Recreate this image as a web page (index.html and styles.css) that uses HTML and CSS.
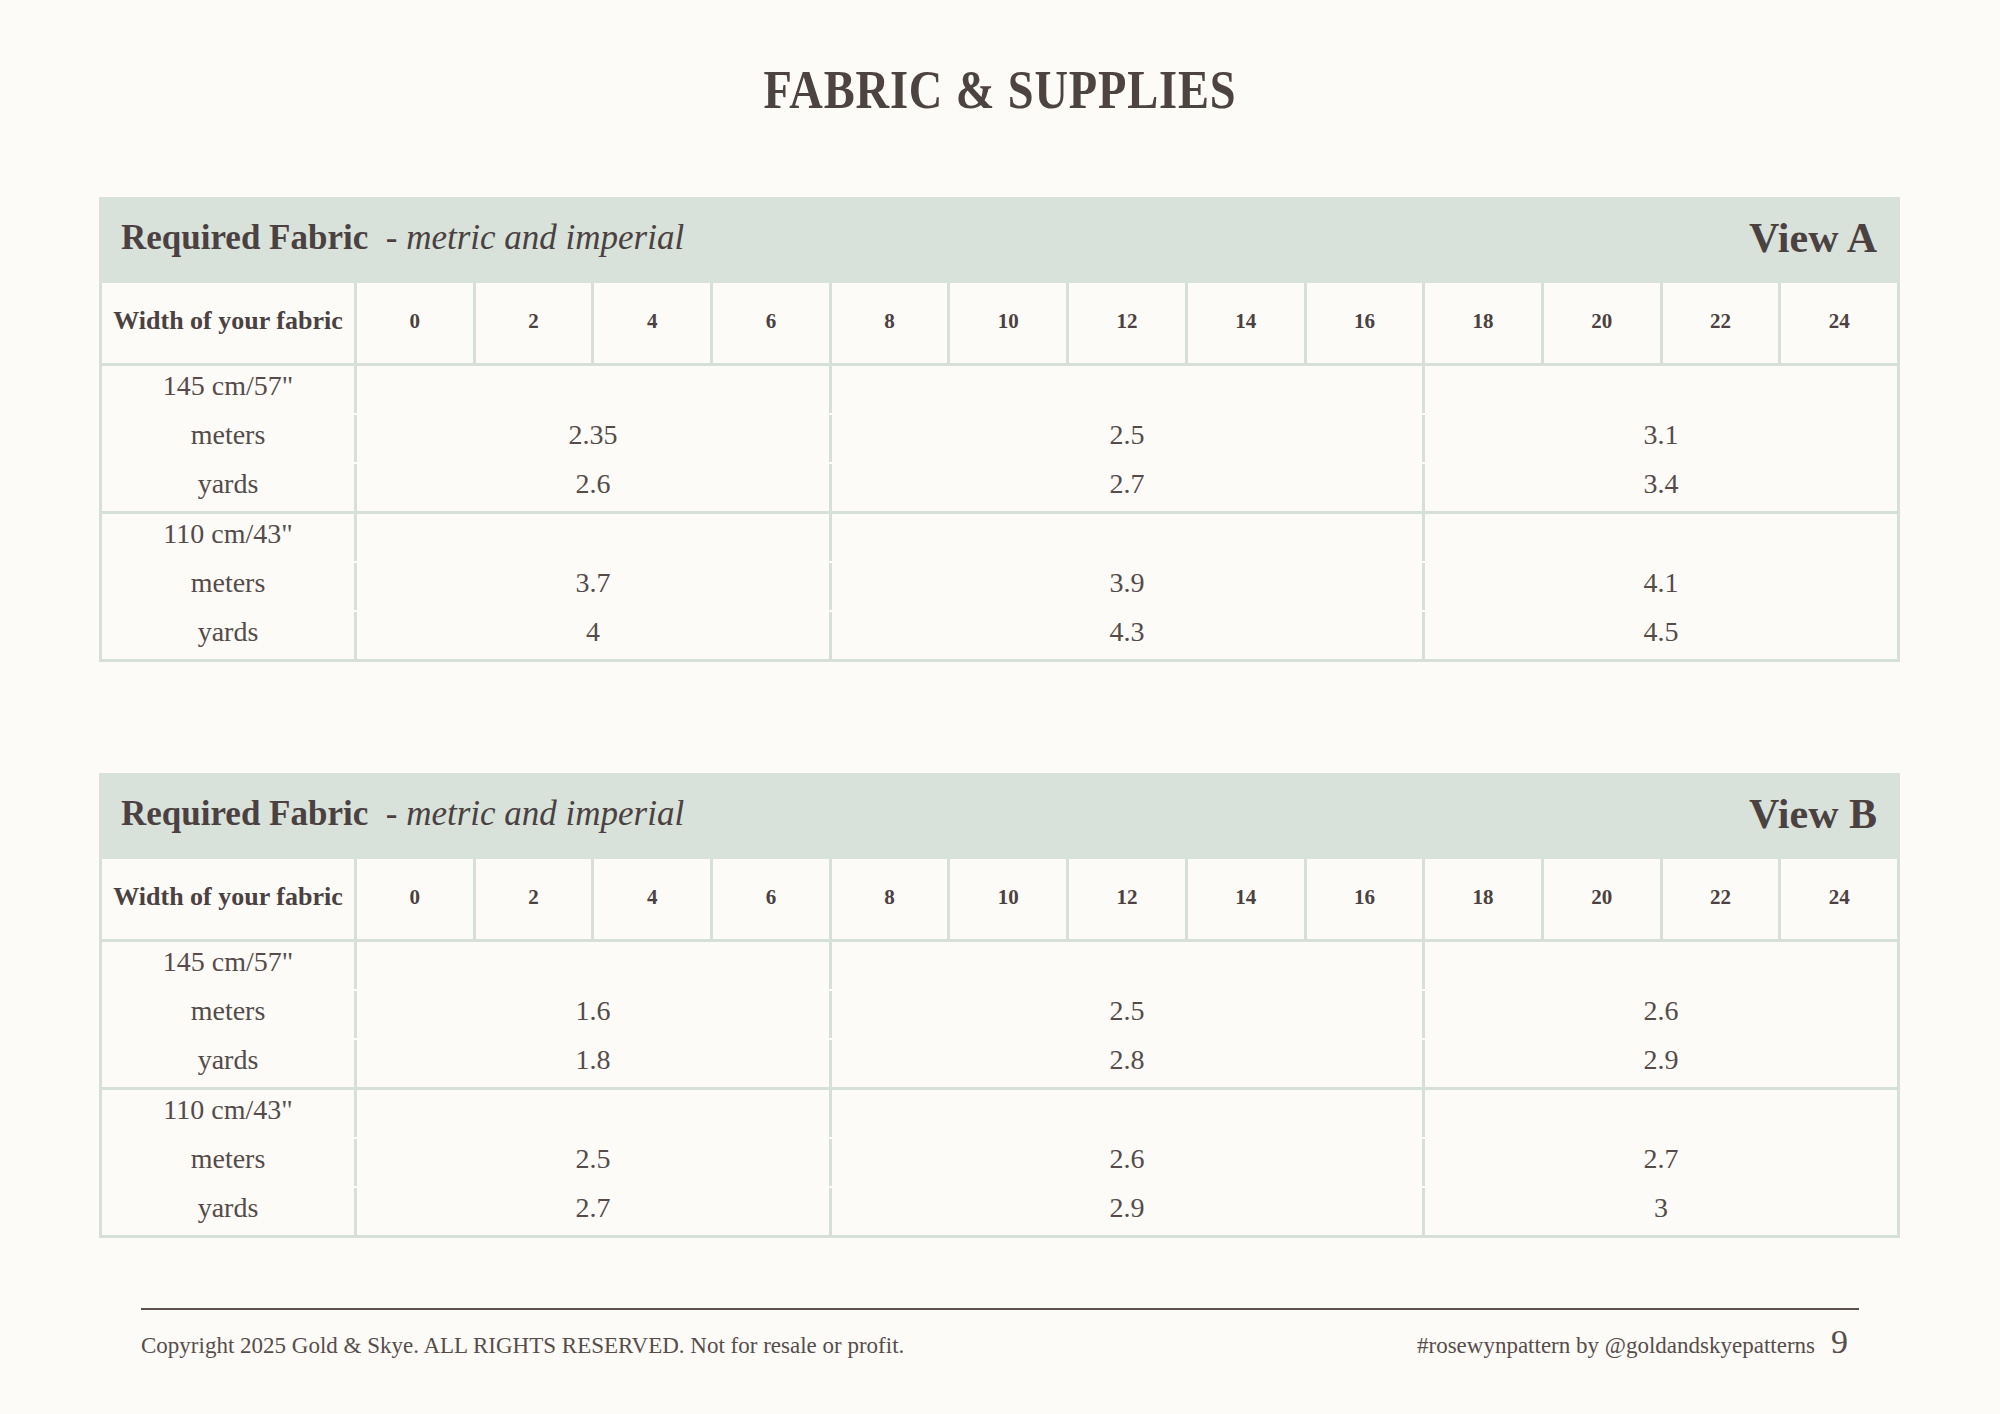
FILE: index.html
```html
<!DOCTYPE html>
<html lang="en">
<head>
<meta charset="utf-8">
<title>Fabric &amp; Supplies</title>
<link rel="stylesheet" href="styles.css">
</head>
<body>
<div class="page">
  <h1 class="title"><span>FABRIC &amp; SUPPLIES</span></h1>

  <section class="sheet">
    <div class="band">
      <div class="band-title"><b>Required Fabric</b>&nbsp; <i>- metric and imperial</i></div>
      <div class="view">View A</div>
    </div>
    <div class="grid head">
      <div class="cell label">Width of your fabric</div>
      <div class="cell num">0</div><div class="cell num">2</div><div class="cell num">4</div><div class="cell num">6</div>
      <div class="cell num">8</div><div class="cell num">10</div><div class="cell num">12</div><div class="cell num">14</div>
      <div class="cell num">16</div><div class="cell num">18</div><div class="cell num">20</div><div class="cell num">22</div>
      <div class="cell num">24</div>
    </div>
    <div class="grid group">
      <div class="cell c1">145 cm/57"</div><div class="cell s4"></div><div class="cell s5"></div><div class="cell s4 last"></div>
      <div class="cell c1">meters</div><div class="cell s4">2.35</div><div class="cell s5">2.5</div><div class="cell s4 last">3.1</div>
      <div class="cell c1">yards</div><div class="cell s4">2.6</div><div class="cell s5">2.7</div><div class="cell s4 last">3.4</div>
    </div>
    <div class="grid group">
      <div class="cell c1">110 cm/43"</div><div class="cell s4"></div><div class="cell s5"></div><div class="cell s4 last"></div>
      <div class="cell c1">meters</div><div class="cell s4">3.7</div><div class="cell s5">3.9</div><div class="cell s4 last">4.1</div>
      <div class="cell c1">yards</div><div class="cell s4">4</div><div class="cell s5">4.3</div><div class="cell s4 last">4.5</div>
    </div>
  </section>

  <section class="sheet second">
    <div class="band">
      <div class="band-title"><b>Required Fabric</b>&nbsp; <i>- metric and imperial</i></div>
      <div class="view">View B</div>
    </div>
    <div class="grid head">
      <div class="cell label">Width of your fabric</div>
      <div class="cell num">0</div><div class="cell num">2</div><div class="cell num">4</div><div class="cell num">6</div>
      <div class="cell num">8</div><div class="cell num">10</div><div class="cell num">12</div><div class="cell num">14</div>
      <div class="cell num">16</div><div class="cell num">18</div><div class="cell num">20</div><div class="cell num">22</div>
      <div class="cell num">24</div>
    </div>
    <div class="grid group">
      <div class="cell c1">145 cm/57"</div><div class="cell s4"></div><div class="cell s5"></div><div class="cell s4 last"></div>
      <div class="cell c1">meters</div><div class="cell s4">1.6</div><div class="cell s5">2.5</div><div class="cell s4 last">2.6</div>
      <div class="cell c1">yards</div><div class="cell s4">1.8</div><div class="cell s5">2.8</div><div class="cell s4 last">2.9</div>
    </div>
    <div class="grid group">
      <div class="cell c1">110 cm/43"</div><div class="cell s4"></div><div class="cell s5"></div><div class="cell s4 last"></div>
      <div class="cell c1">meters</div><div class="cell s4">2.5</div><div class="cell s5">2.6</div><div class="cell s4 last">2.7</div>
      <div class="cell c1">yards</div><div class="cell s4">2.7</div><div class="cell s5">2.9</div><div class="cell s4 last">3</div>
    </div>
  </section>

  <footer class="footer">
    <div class="copy">Copyright 2025 Gold &amp; Skye. ALL RIGHTS RESERVED. Not for resale or profit.</div>
    <div class="right"><span class="tag">#rosewynpattern by @goldandskyepatterns</span><span class="pageno">9</span></div>
  </footer>
</div>
</body>
</html>
```

FILE: styles.css
```css
:root {
  --bg: #fcfbf8;
  --ink: #4b4140;
  --soft: #554b49;
  --line: #d6e0d9;
  --band: #d8e2db;
}

html, body {
  margin: 0;
  padding: 0;
  background: var(--bg);
}

body {
  width: 2000px;
  height: 1414px;
  overflow: hidden;
  font-family: "Liberation Serif", "Times New Roman", serif;
  color: var(--ink);
}

.page {
  padding-top: 62px;
}

.title {
  margin: 0;
  text-align: center;
  font-size: 54px;
  line-height: 56px;
  font-weight: 700;
  color: #4d4341;
}

.title span {
  display: inline-block;
  transform: scaleX(0.86);
  letter-spacing: 1px;
}

.sheet {
  width: 1801px;
  margin: 79px 0 0 99px;
}

.sheet.second {
  margin-top: 111px;
}

.band {
  height: 86px;
  background: var(--band);
  display: flex;
  align-items: center;
  justify-content: space-between;
  padding: 0 23px 4px 22px;
  box-sizing: border-box;
}

.band-title {
  font-size: 35px;
  white-space: pre;
}

.band-title b {
  font-weight: 700;
}

.band-title i {
  font-style: italic;
}

.view {
  font-size: 42px;
  font-weight: 700;
}

.grid {
  display: grid;
  grid-template-columns: 252px repeat(13, 1fr);
  column-gap: 3px;
  border: 3px solid var(--line);
  border-top: 0;
}

.head {
  background: var(--line);
  grid-template-rows: 80px;
}

.head .cell {
  background: var(--bg);
  display: flex;
  align-items: center;
  justify-content: center;
  padding-bottom: 4px;
  box-sizing: border-box;
}

.label {
  font-size: 26px;
  font-weight: 700;
}

.num {
  font-size: 21px;
  font-weight: 700;
}

.group {
  background: var(--bg);
  grid-auto-rows: 47px;
  row-gap: 2px;
}

.group .cell {
  display: flex;
  align-items: center;
  justify-content: center;
  font-size: 28px;
  color: var(--soft);
  padding-bottom: 7px;
  box-sizing: border-box;
  box-shadow: 3px 0 0 var(--line);
}

.group .cell.last {
  box-shadow: none;
}

.s4 {
  grid-column: span 4;
}

.s5 {
  grid-column: span 5;
}

.footer {
  margin: 70px 141px 0 141px;
  border-top: 2px solid #5b5250;
  padding-top: 13px;
  display: flex;
  justify-content: space-between;
  align-items: baseline;
  color: #574d4b;
}

.copy {
  font-size: 23px;
}

.right {
  display: flex;
  align-items: baseline;
  gap: 16px;
  padding-right: 11px;
}

.tag {
  font-size: 23px;
}

.pageno {
  font-size: 34px;
}
```
